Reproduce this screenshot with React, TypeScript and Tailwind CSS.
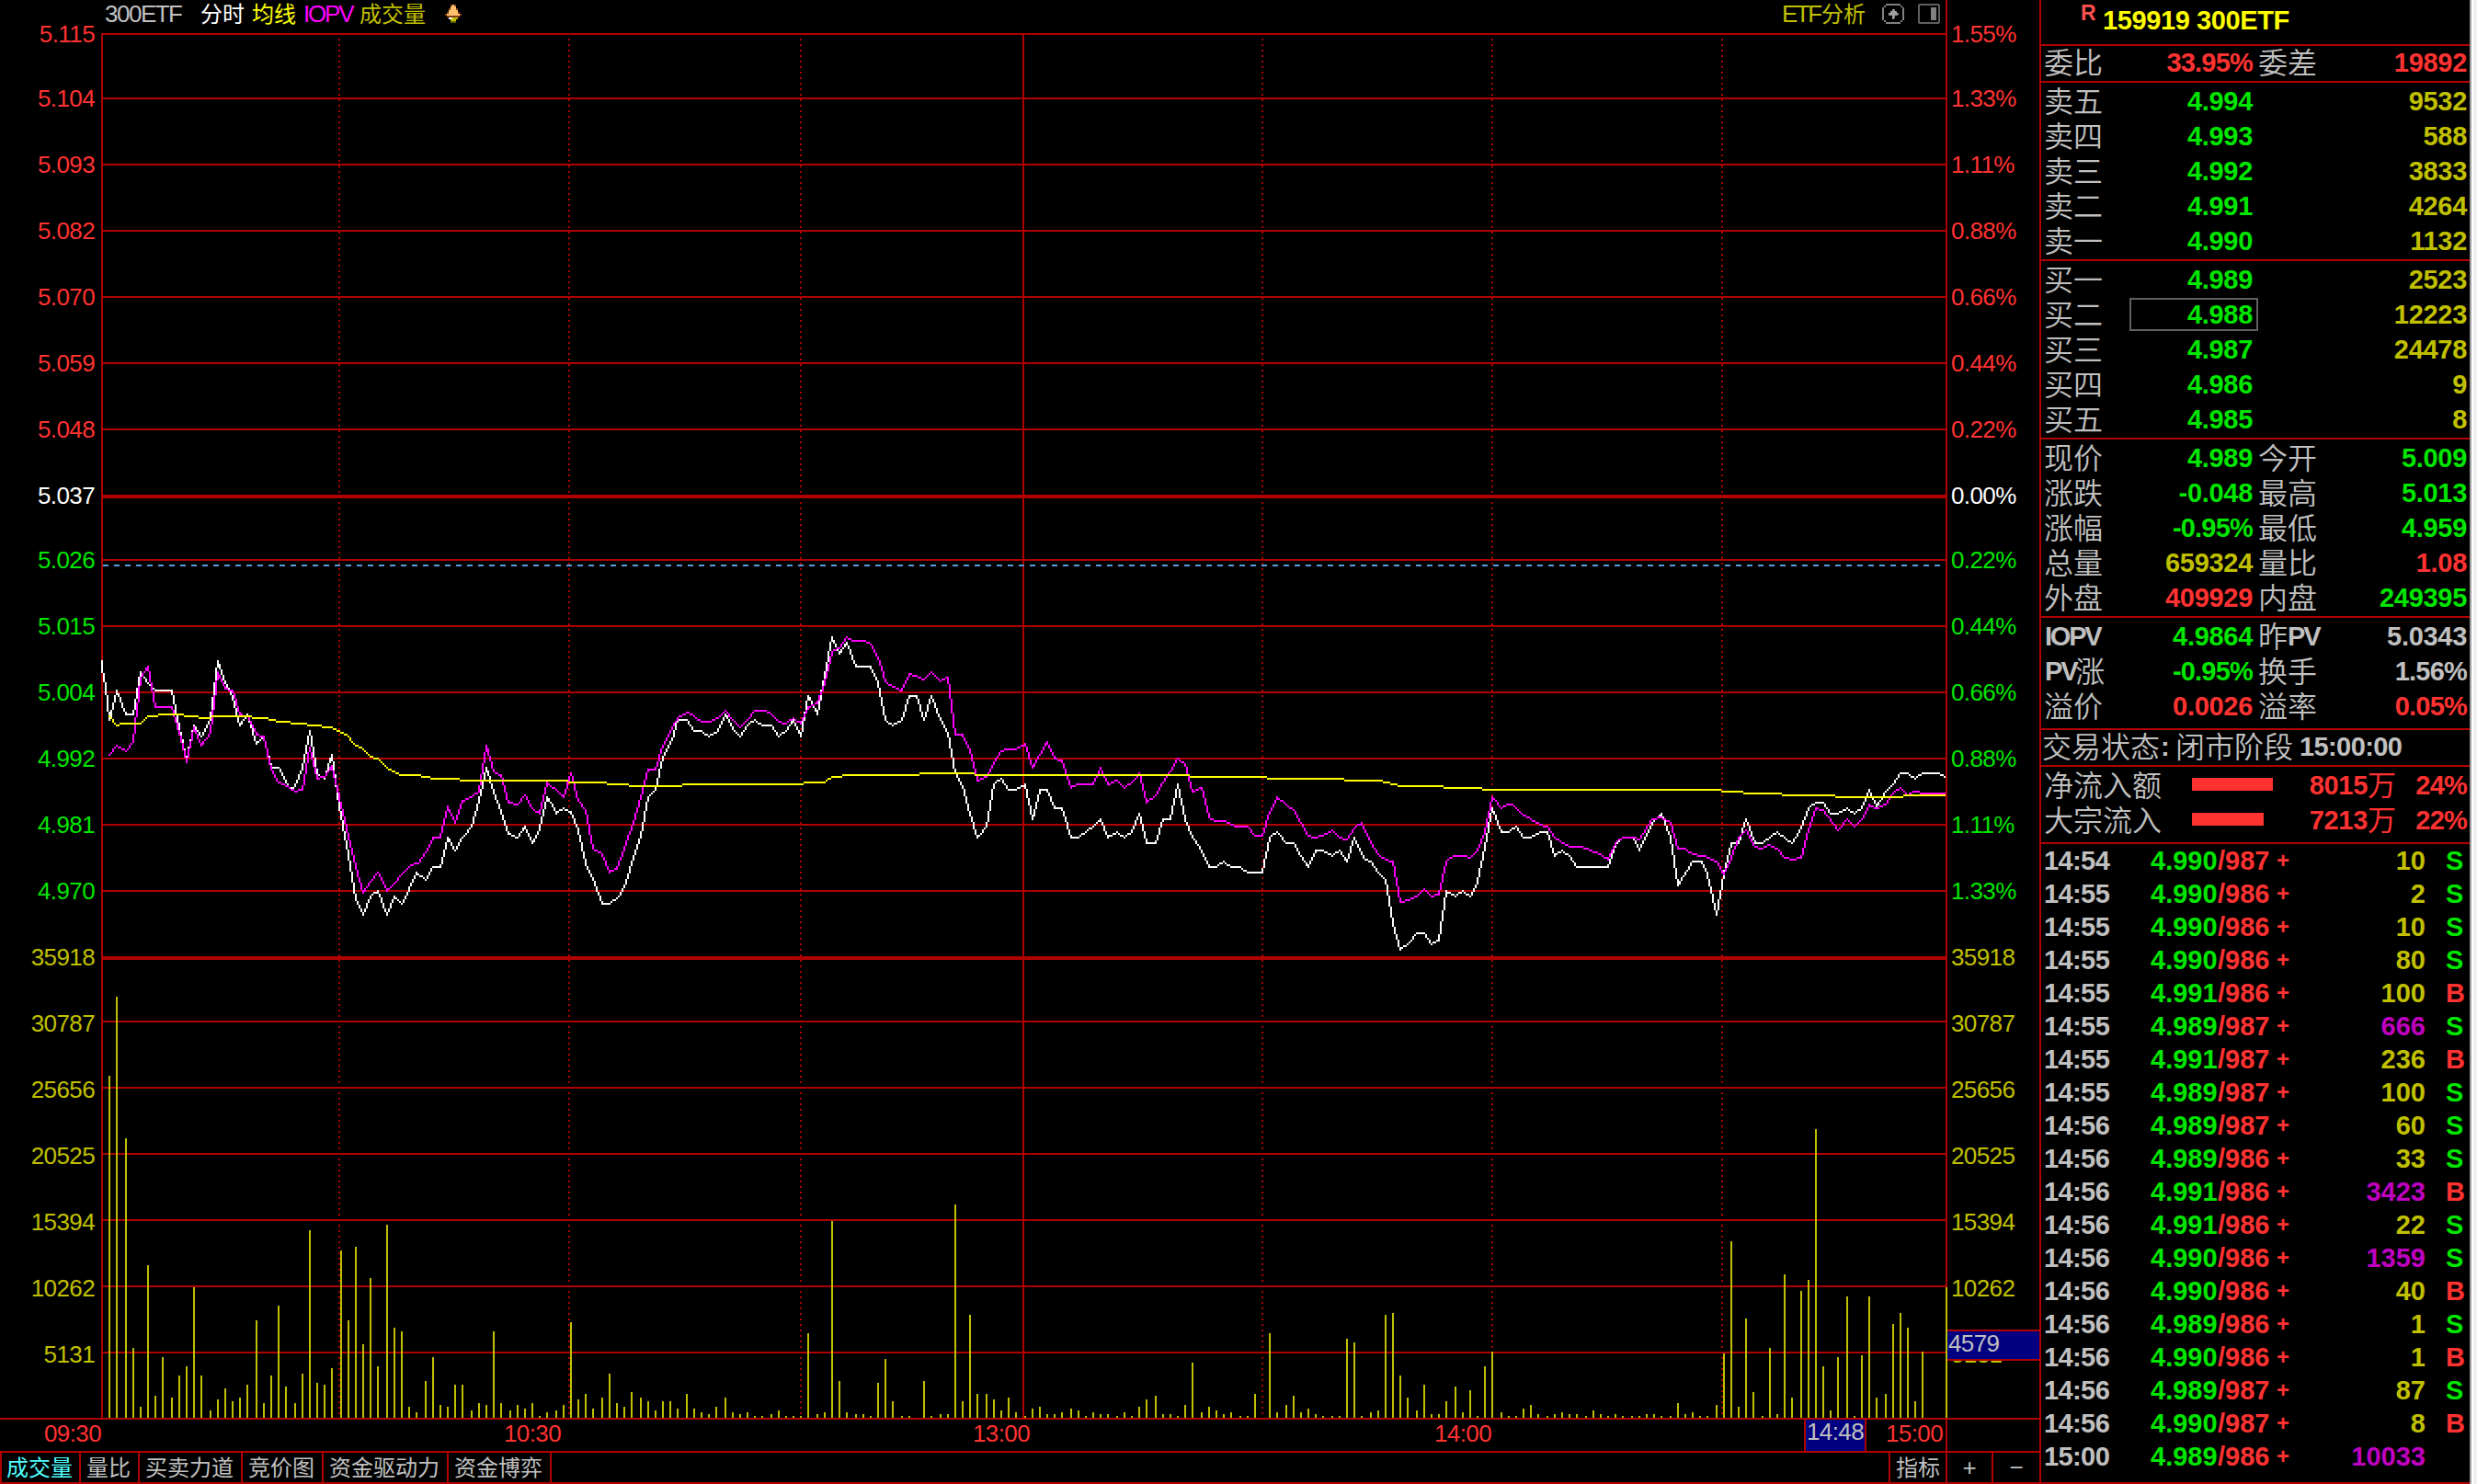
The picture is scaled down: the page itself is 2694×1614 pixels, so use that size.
import React from 'react';
import clsx from 'clsx';

const RED = 'text-[#ff3232]';
const GREEN = 'text-[#00e600]';
const YELLOW = 'text-[#c0c000]';
const GRAY = 'text-[#c0c0c0]';
const MAGENTA = 'text-[#c000c0]';

// y positions of the horizontal grid lines, in page pixels
const PRICE_LINES = [36, 106, 178, 250, 322, 394, 466, 538, 608, 680, 752, 824, 896, 968, 1040];
const VOLUME_LINES = [1110, 1182, 1254, 1326, 1398, 1470];

const PRICE_LABELS = ['5.115', '5.104', '5.093', '5.082', '5.070', '5.059', '5.048', '5.037', '5.026', '5.015', '5.004', '4.992', '4.981', '4.970'];
const PERCENT_LABELS = ['1.55%', '1.33%', '1.11%', '0.88%', '0.66%', '0.44%', '0.22%', '0.00%', '0.22%', '0.44%', '0.66%', '0.88%', '1.11%', '1.33%'];
const VOLUME_LABELS = ['35918', '30787', '25656', '20525', '15394', '10262', '5131'];

// one entry per minute, bar height in page pixels
const VOLUMES = [
  0, 372, 458, 304, 76, 12, 166, 24, 66, 22, 46, 56, 142, 46, 8, 20, 32, 18, 22, 36,
  106, 16, 46, 122, 34, 16, 48, 204, 38, 36, 54, 182, 106, 186, 80, 152, 56, 210, 98, 94,
  12, 6, 40, 66, 14, 12, 36, 36, 8, 16, 14, 94, 16, 8, 14, 10, 16, 2, 6, 8,
  14, 104, 20, 26, 10, 22, 48, 16, 12, 28, 22, 18, 8, 18, 18, 10, 26, 10, 6, 4,
  12, 22, 6, 4, 6, 2, 2, 4, 8, 2, 2, 2, 92, 4, 6, 214, 40, 6, 4, 4,
  2, 38, 64, 18, 2, 2, 0, 40, 2, 4, 4, 232, 18, 112, 26, 26, 20, 8, 22, 6,
  2, 10, 12, 4, 4, 6, 10, 8, 2, 6, 4, 4, 2, 6, 2, 12, 20, 24, 4, 4,
  2, 14, 60, 6, 12, 8, 4, 6, 2, 2, 26, 0, 92, 6, 14, 24, 6, 10, 4, 2,
  2, 2, 86, 82, 2, 6, 8, 112, 114, 46, 22, 8, 36, 4, 4, 18, 34, 6, 30, 2,
  56, 72, 6, 2, 2, 10, 14, 4, 2, 4, 6, 4, 4, 2, 8, 4, 2, 4, 2, 2,
  2, 4, 4, 2, 2, 16, 4, 6, 2, 2, 14, 70, 192, 12, 108, 28, 2, 76, 4, 156,
  22, 138, 150, 314, 56, 8, 66, 132, 2, 68, 132, 22, 26, 102, 114, 98, 18, 72, 0, 0,
  142,
];

const PRICE = `55,359 55,363 57,373 59,391 63,375 68,388 72,388 76,365 80,371 84,375 93,375 97,395 101,413 105,394 109,400 114,390 118,359
122,371 126,379 130,394 134,388 139,404 143,400 147,417 151,417 156,427 159,429 164,417 168,397 172,420 176,423 180,410 184,438 188,459
193,488 197,497 201,487 205,484 210,497 214,487 218,491 222,483 226,474 231,478 235,471 239,471 243,455 247,462 251,455 256,449 260,435
264,417 268,430 272,441 276,453 281,455 285,449 289,458 293,450 297,433 299,436 302,442 306,439 310,441 314,451 318,469 323,480 327,491
331,491 336,487 340,479 344,466 348,454 352,433 356,429 360,411 365,402 368,391 373,391 377,397 381,397 385,400 390,397 394,388 399,397
402,400 406,394 410,391 414,394 419,394 423,400 427,397 431,391 435,400 439,378 444,388 448,367 452,346 456,355 460,349 465,362 473,362
477,371 481,391 485,394 490,391 494,378 498,378 502,391 506,378 511,391 515,398 519,420 523,427 527,442 531,455 536,449 540,426 544,423
548,429 552,429 557,426 561,445 565,429 569,429 573,439 577,439 582,455 586,455 590,452 594,449 598,445 602,455 607,452 611,455 615,452
619,442 623,458 628,458 632,445 636,445 640,426 644,445 648,455 652,460 657,471 661,471 665,468 669,471 674,471 678,474 686,474 690,455
694,452 699,458 703,458 707,465 711,471 715,462 719,462 724,465 728,462 732,468 736,455 741,466 745,468 749,474 753,478 757,502 761,516
765,513 770,507 774,507 778,513 782,511 786,484 791,487 795,484 799,487 803,479 807,460 811,439 816,452 820,452 824,449 828,455 832,455
837,452 841,452 845,465 849,462 853,465 857,471 874,471 878,459 882,455 888,455 891,462 898,447 903,442 908,455 912,481 920,468 925,468
928,475 933,497 937,475 941,458 945,458 949,445 954,458 958,458 966,452 974,458 979,450 983,439 987,436 991,436 995,442 999,442 1004,439
1008,442 1012,439 1016,429 1020,438 1025,430 1029,426 1033,420 1037,420 1041,423 1045,420 1054,420 1057,422`;

const IOPV = `59,410 63,405 68,408 72,403 76,368 80,362 84,384 93,384 97,398 101,414 105,395 109,405 114,398 118,365 122,374 126,375
130,388 134,389 139,399 143,400 147,418 151,425 156,427 160,430 164,429 168,406 172,423 176,422 180,416 184,433 188,450 193,471 197,485
201,479 205,474 210,484 214,480 218,475 223,470 227,469 231,463 235,455 239,455 243,438 247,447 251,435 256,433 260,430 264,405 268,419
272,421 276,436 281,437 285,432 289,439 293,442 297,425 299,427 302,429 306,433 310,420 314,435 318,440 322,461 327,464 331,474 335,472
340,458 344,447 348,433 352,418 356,418 360,405 365,395 369,389 374,387 381,392 386,392 390,390 394,386 398,391 402,395 406,391 410,386
416,386 419,388 423,392 427,393 431,390 435,393 439,384 444,382 448,371 452,354 456,352 460,346 464,348 470,348 473,350 478,360 481,370
485,373 490,375 494,366 498,367 502,369 506,365 511,370 515,368 519,399 523,399 527,408 531,424 536,422 540,414 544,408 547,407 552,407
557,404 561,417 565,410 569,403 573,412 577,413 582,428 585,426 594,426 598,417 602,426 607,424 611,428 616,424 619,420 623,436 628,432
632,425 636,419 640,412 644,415 648,430 653,428 657,444 661,446 666,446 672,449 678,449 682,454 686,454 690,441 694,433 699,437 703,440
711,454 715,455 719,454 724,451 728,455 732,456 736,450 740,447 745,458 749,464 753,467 757,468 761,490 766,489 770,487 774,483 778,487
782,486 786,468 790,465 797,465 799,466 803,462 807,452 811,433 816,439 819,437 822,437 827,442 837,448 841,449 845,455 853,460 859,460
870,464 874,467 878,458 882,455 889,455 891,456 898,445 903,444 908,447 912,461 916,461 920,464 926,465 933,468 937,475 941,466 945,455
949,451 954,460 958,461 962,459 966,461 970,466 975,467 979,466 983,451 987,439 991,440 999,451 1004,445 1008,449 1012,445 1016,437
1020,439 1025,437 1029,431 1033,428 1037,432 1041,430 1046,431 1057,431`;

const AVERAGE = `59,389 63,394 66,393 76,393 80,389 85,389 86,388 99,388 100,389 107,389 108,390 114,390 115,389 136,389 137,390 145,390
146,391 149,391 150,392 157,392 158,393 166,393 167,394 174,394 175,395 180,395 183,397 188,399 192,404 197,407 201,411 205,412 210,417
217,421 228,421 229,422 233,422 234,423 249,423 250,424 308,424 309,425 329,425 330,426 341,426 342,427 370,427 371,426 436,426 437,425
448,425 449,424 452,422 457,422 458,421 499,421 500,420 529,420 530,421 646,421 647,422 688,422 689,423 730,423 731,424 751,424 752,425
755,425 756,426 759,426 760,427 784,427 785,428 805,428 806,429 935,429 936,430 947,430 948,431 968,431 969,432 997,432 998,433
1034,433 1035,432 1057,432`;

// The chart is drawn on a grid of 2px cells, so lines are stepped cell by cell
function tracePath(source: string) {
  const pts = source.trim().split(/\s+/).map((p) => p.split(',').map(Number));
  let d = '';
  for (let i = 1; i < pts.length; i++) {
    let [x, y] = pts[i - 1];
    const [x1, y1] = pts[i];
    const dx = Math.abs(x1 - x);
    const dy = -Math.abs(y1 - y);
    const sx = x < x1 ? 1 : -1;
    const sy = y < y1 ? 1 : -1;
    let err = dx + dy;
    while (true) {
      d += `M${x} ${y}h1v1h-1z`;
      if (x === x1 && y === y1) break;
      const e2 = 2 * err;
      if (e2 >= dy) {
        err += dy;
        x += sx;
      }
      if (e2 <= dx) {
        err += dx;
        y += sy;
      }
    }
  }
  return d;
}

function barX(i: number) {
  return Math.floor((i < 120 ? 55.55 : 55.6) + 4.1785 * i);
}

function Chart() {
  return (
    <svg className="block w-[2008px] h-[1514px] shrink-0" viewBox="55 14 1004 757" shapeRendering="crispEdges">
      <g fill="#b00000">
        {[...PRICE_LINES, ...VOLUME_LINES].map((y) => (
          <rect key={y} x={55} y={y / 2} width={1004} height={y === 538 || y === 1040 ? 2 : 1} />
        ))}
        <rect x={55} y={18} width={1} height={753} />
        <rect x={556} y={18} width={1} height={753} />
        <rect x={1058} y={14} width={1} height={757} />
      </g>
      {[184, 309, 435, 686, 811, 936].map((x) => (
        <line key={x} x1={x + 0.5} x2={x + 0.5} y1={21} y2={771} stroke="#b00000" strokeDasharray="1 2" />
      ))}
      <line x1={56} x2={1058} y1={307.5} y2={307.5} stroke="#5a9bd8" strokeDasharray="3 3" />
      <g fill="#c0c000">
        {VOLUMES.map((h, i) => (h ? <rect key={i} x={barX(i)} y={771 - h / 2} width={1} height={h / 2} /> : null))}
      </g>
      <path d={tracePath(PRICE)} fill="#ffffff" />
      <path d={tracePath(IOPV)} fill="#ff00ff" />
      <path d={tracePath(AVERAGE)} fill="#ffff00" />
    </svg>
  );
}

function AxisLabels({ labels, className }: { labels: string[]; className: string }) {
  const all = [...labels, ...VOLUME_LABELS];
  // volume captions hang two pixels lower than the price ones
  const tops = [...PRICE_LINES.map((y) => y - 8), ...VOLUME_LINES.map((y) => y - 6), 1542];
  return (
    <div className={clsx('text-[26px] leading-[18px] tracking-[-0.6px] shrink-0', className)}>
      {all.map((label, i) => (
        <div
          key={i}
          style={{ height: tops[i + 1] - tops[i] }}
          className={i < 7 ? RED : i === 7 ? 'text-white' : i < 14 ? GREEN : YELLOW}
        >
          {label}
        </div>
      ))}
    </div>
  );
}

function Cjk({ children, className }: { children: React.ReactNode; className?: string }) {
  return <span className={clsx('pt-[2px] whitespace-nowrap', className)}>{children}</span>;
}

function Label({ text }: { text: string }) {
  // Latin letters inside a caption use the bold number face
  const parts = text.match(/[A-Z]+|[^A-Z]+/g) ?? [];
  return (
    <div className="w-16 shrink-0 flex items-center text-[#c0c0c0] whitespace-nowrap">
      {parts.map((p) =>
        /[A-Z]/.test(p) ? (
          <span key={p} className="font-bold text-[29px] leading-[20px] tracking-[-2.2px]">{p}</span>
        ) : (
          <Cjk key={p} className="text-[32px] leading-[30px] -ml-px font-[350]">{p}</Cjk>
        )
      )}
    </div>
  );
}

function Num({ text, className }: { text: string; className: string }) {
  return (
    <div
      className={clsx(
        'font-bold text-[29px] leading-[20px] text-right whitespace-nowrap',
        text.endsWith('%') ? 'tracking-[-0.8px]' : 'tracking-[-0.3px]',
        className
      )}
    >
      {text}
    </div>
  );
}

type Row = [string, string, string, string, string, string];

const ORDER_RATIO: Row = ['委比', '33.95%', RED, '委差', '19892', RED];

const ASKS = [
  ['卖五', '4.994', '9532'],
  ['卖四', '4.993', '588'],
  ['卖三', '4.992', '3833'],
  ['卖二', '4.991', '4264'],
  ['卖一', '4.990', '1132'],
];

const BIDS = [
  ['买一', '4.989', '2523'],
  ['买二', '4.988', '12223'],
  ['买三', '4.987', '24478'],
  ['买四', '4.986', '9'],
  ['买五', '4.985', '8'],
];

const QUOTES: Row[] = [
  ['现价', '4.989', GREEN, '今开', '5.009', GREEN],
  ['涨跌', '-0.048', GREEN, '最高', '5.013', GREEN],
  ['涨幅', '-0.95%', GREEN, '最低', '4.959', GREEN],
  ['总量', '659324', YELLOW, '量比', '1.08', RED],
  ['外盘', '409929', RED, '内盘', '249395', GREEN],
];

const FUND: Row[] = [
  ['IOPV', '4.9864', GREEN, '昨PV', '5.0343', GRAY],
  ['PV涨', '-0.95%', GREEN, '换手', '1.56%', GRAY],
  ['溢价', '0.0026', RED, '溢率', '0.05%', RED],
];

const TICKS = [
  ['14:54', '4.990', '987', '10', 'S'],
  ['14:55', '4.990', '986', '2', 'S'],
  ['14:55', '4.990', '986', '10', 'S'],
  ['14:55', '4.990', '986', '80', 'S'],
  ['14:55', '4.991', '986', '100', 'B'],
  ['14:55', '4.989', '987', '666', 'S'],
  ['14:55', '4.991', '987', '236', 'B'],
  ['14:55', '4.989', '987', '100', 'S'],
  ['14:56', '4.989', '987', '60', 'S'],
  ['14:56', '4.989', '986', '33', 'S'],
  ['14:56', '4.991', '986', '3423', 'B'],
  ['14:56', '4.991', '986', '22', 'S'],
  ['14:56', '4.990', '986', '1359', 'S'],
  ['14:56', '4.990', '986', '40', 'B'],
  ['14:56', '4.989', '986', '1', 'S'],
  ['14:56', '4.990', '986', '1', 'B'],
  ['14:56', '4.989', '987', '87', 'S'],
  ['14:56', '4.990', '987', '8', 'B'],
  ['15:00', '4.989', '986', '10033', ''],
];

function QuoteRow({ row, className }: { row: Row; className?: string }) {
  const [l1, v1, c1, l2, v2, c2] = row;
  return (
    <div className={clsx('h-[38px] flex items-center pl-1 pr-[3px]', className ?? 'pt-[2px]')}>
      <Label text={l1} />
      <Num text={v1} className={clsx('w-[162px]', c1)} />
      <div className="w-[7px]" />
      <Label text={l2} />
      <Num text={v2} className={clsx('flex-1', c2)} />
    </div>
  );
}

function BookRow({ row }: { row: string[] }) {
  const selected = row[0] === '买二';
  return (
    <div className="h-[38px] flex items-center pl-1 pr-[3px] pt-[2px]">
      <Label text={row[0]} />
      <div className="w-7" />
      <div
        className={clsx(
          'w-[140px] h-9 border-2 flex items-center justify-end pr-1',
          selected ? 'border-[#606060]' : 'border-transparent'
        )}
      >
        <Num text={row[1]} className={GREEN} />
      </div>
      <Num text={row[2]} className={clsx('flex-1', YELLOW)} />
    </div>
  );
}

function FlowRow({ label, width, amount, percent }: { label: string; width: string; amount: string; percent: string }) {
  return (
    <div className="h-[38px] flex items-center pl-[3px] pr-[3px] pt-[2px]">
      <Cjk className="w-[161px] text-[32px] leading-[30px] text-[#c0c0c0] font-[350]">{label}</Cjk>
      <div className={clsx('h-[14px] bg-[#ff3232] mb-[2px]', width)} />
      <div className="flex-1 flex items-center justify-end">
        <Num text={amount} className={RED} />
        <Cjk className="text-[31px] leading-[28px] text-[#ff3232]">万</Cjk>
      </div>
      <Num text={percent} className={clsx('w-[77px]', RED)} />
    </div>
  );
}

function SidePanel() {
  return (
    <aside className="w-[468px] h-full shrink-0 border-l-2 border-b-2 border-[#b00000] flex flex-col">
      <div className="h-[50px] border-b-2 border-[#b00000] flex pl-[43px]">
        <span className="text-[23px] leading-[16px] font-bold text-[#ff5050] mt-[6px] w-[24px]">R</span>
        <span className="text-[29px] leading-[20px] tracking-[-0.4px] font-bold text-[#ffff00] mt-3">159919 300ETF</span>
      </div>
      <div className="h-10 border-b-2 border-[#b00000]">
        <QuoteRow row={ORDER_RATIO} className="pb-[2px]" />
      </div>
      <div className="h-[194px] border-b-2 border-[#b00000]">
        {ASKS.map((r) => <BookRow key={r[0]} row={r} />)}
      </div>
      <div className="h-[194px] border-b-2 border-[#b00000]">
        {BIDS.map((r) => <BookRow key={r[0]} row={r} />)}
      </div>
      <div className="h-[194px] border-b-2 border-[#b00000]">
        {QUOTES.map((r) => <QuoteRow key={r[0]} row={r} />)}
      </div>
      <div className="h-[122px] border-b-2 border-[#b00000]">
        {FUND.map((r) => <QuoteRow key={r[0]} row={r} />)}
      </div>
      <div className="h-10 border-b-2 border-[#b00000] flex items-center pl-px pb-[2px] text-[#c0c0c0]">
        <Cjk className="text-[32px] leading-[30px] w-[129px] font-[350]">交易状态</Cjk>
        <span className="text-[29px] leading-[20px] font-bold w-4">:</span>
        <Cjk className="text-[32px] leading-[30px] w-[135px] font-[350]">闭市阶段</Cjk>
        <span className="text-[29px] leading-[20px] font-bold tracking-[-0.6px]">15:00:00</span>
      </div>
      <div className="h-[84px] border-b-2 border-[#b00000]">
        <FlowRow label="净流入额" width="w-[88px]" amount="8015" percent="24%" />
        <FlowRow label="大宗流入" width="w-[78px]" amount="7213" percent="22%" />
      </div>
      <div className="flex-1">
        {TICKS.map(([time, price, iopv, qty, side], i) => (
          <div key={i} className="h-9 flex items-center pl-[3px] font-bold text-[29px] leading-[20px]">
            <span className="w-[116px] text-[#c0c0c0] tracking-[-0.6px]">{time}</span>
            <span className="w-[73px] text-[#00e600]">{price}</span>
            <span className="w-[64px] text-[#ff3232]">/{iopv}</span>
            <span className="w-[12px] text-[24px] text-[#ff3232]">+</span>
            <span className={clsx('w-[150px] text-right', Number(qty) > 500 ? MAGENTA : YELLOW)}>{qty}</span>
            <span className={clsx('ml-[22px] w-5', side === 'S' ? GREEN : RED)}>{side}</span>
          </div>
        ))}
      </div>
    </aside>
  );
}

function BellIcon() {
  return (
    <svg className="w-[18px] h-5" viewBox="0 0 9 10" shapeRendering="crispEdges">
      <path d="M3 0h3v2h1v2h1v1h1v1H8v1H1V6H0V5h1V4h1V2h1z" fill="#804010" />
      <path d="M4 0h1v1h1v2h1v2h1v1H1V5h1V3h1V1h1z" fill="#ffc070" />
      <path d="M2 7h5v1H6v1H3V8H2z" fill="#c0c000" />
      <path d="M2 7h2v1H2z" fill="#ffffff" />
      <path d="M3 9h3v1H3z" fill="#606000" />
    </svg>
  );
}

function Header() {
  return (
    <div className="h-7 flex">
      <div className="w-[2118px] border-r-2 border-[#b00000] flex items-center pt-[2px] pl-[114px] text-[26px] leading-[18px]">
        <span className="w-[104px] text-[#c0c0c0] tracking-[-1.5px]">300ETF</span>
        <Cjk className="w-[56px] text-[24px] leading-[22px] text-white">分时</Cjk>
        <Cjk className="w-[56px] text-[24px] leading-[22px] text-[#ffff00]">均线</Cjk>
        <span className="w-[61px] text-[#ff00ff] tracking-[-2.2px]">IOPV</span>
        <Cjk className="w-[93px] text-[24px] leading-[22px] text-[#c0c000]">成交量</Cjk>
        <BellIcon />
        <div className="flex-1" />
        <span className="text-[#c0c000] tracking-[-2.5px] w-[43px]">ETF</span>
        <Cjk className="w-[66px] text-[24px] leading-[22px] text-[#c0c000]">分析</Cjk>
        <svg className="w-6 h-[22px]" viewBox="0 0 12 11" shapeRendering="crispEdges">
          <path d="M2 0h8v1H2zM2 10h8v1H2zM0 2h1v7H0zM11 2h1v7h-1zM1 1h1v1H1zM10 1h1v1h-1zM1 9h1v1H1zM10 9h1v1h-1z" fill="#808080" />
          <path d="M5.5 3h1v1h1v1h1v1h-2v2h-1V6h-2V5h1V4h1z" fill="#a0a0a0" stroke="#a0a0a0" strokeWidth=".4" />
        </svg>
        <svg className="w-6 h-[22px] ml-[15px] mr-[6px]" viewBox="0 0 12 11" shapeRendering="crispEdges">
          <rect x=".5" y=".5" width="11" height="10" rx="1" fill="none" stroke="#606060" />
          <path d="M7 2h3v7H7z" fill="#808080" />
        </svg>
      </div>
    </div>
  );
}

function TimeAxis() {
  return (
    <div className="h-9 border-b-2 border-[#b00000] flex">
      <div className="w-[2118px] border-r-2 border-[#b00000] flex items-start text-[26px] leading-[18px] tracking-[-0.6px] text-[#ff3232] whitespace-nowrap">
        <span className="mt-[6px] ml-[48px] w-[62px]">09:30</span>
        <span className="mt-[6px] ml-[438px] w-[62px]">10:30</span>
        <span className="mt-[6px] ml-[448px] w-[62px]">13:00</span>
        <span className="mt-[6px] ml-[440px] w-[62px]">14:00</span>
        <span className="ml-[340px] w-[68px] h-[34px] pt-[4px] pl-px border-x-2 border-[#b00000] bg-[#000080] text-[#c0c0c0]">14:48</span>
        <span className="mt-[6px] ml-[21px] w-[62px]">15:00</span>
      </div>
    </div>
  );
}

function Tabs() {
  const tabs: [string, string][] = [
    ['成交量', 'w-[86px]'],
    ['量比', 'w-16'],
    ['买卖力道', 'w-28'],
    ['竞价图', 'w-[88px]'],
    ['资金驱动力', 'w-[136px]'],
    ['资金博弈', 'w-28'],
  ];
  return (
    <div className="h-[34px] border-b-2 border-l-2 border-[#b00000] flex">
      {tabs.map(([name, width], i) => (
        <div key={name} className={clsx('border-r-2 border-[#b00000] flex items-center justify-center pr-[2px]', width)}>
          <Cjk className={clsx('text-[24px] leading-[22px]', i === 0 ? 'text-[#50ffff]' : GRAY)}>{name}</Cjk>
        </div>
      ))}
      <div className="flex-1" />
      <div className="w-[64px] border-x-2 border-[#b00000] flex items-center justify-center">
        <Cjk className="text-[24px] leading-[22px] text-[#c0c0c0]">指标</Cjk>
      </div>
      <div className="w-[50px] border-r-2 border-[#b00000] flex items-center justify-center text-[26px] leading-[18px] text-[#c0c0c0]">+</div>
      <div className="w-[50px] flex items-center justify-center text-[26px] leading-[18px] text-[#c0c0c0]">−</div>
    </div>
  );
}

export default function App() {
  return (
    <div className='w-[2694px] h-[1614px] bg-black overflow-hidden flex font-["Liberation_Sans","Noto_Sans_CJK_SC",sans-serif]'>
      <main className="w-[2218px] shrink-0 flex flex-col">
        <Header />
        <div className="h-[1516px] flex border-b-2 border-[#b00000]">
          <AxisLabels labels={PRICE_LABELS} className="w-[110px] text-right pr-[7px]" />
          <Chart />
          <div className="relative">
            <AxisLabels labels={PERCENT_LABELS} className="w-[100px] pl-[4px]" />
            <div className="absolute left-0 top-[1418px] w-[100px] h-[34px] border-y-2 border-[#b00000] bg-[#000080] text-[26px] leading-[18px] tracking-[-0.6px] text-[#c0c0c0] pt-[4px] pl-[1px]">
              4579
            </div>
          </div>
        </div>
        <TimeAxis />
        <Tabs />
      </main>
      <SidePanel />
      <div className="w-2 border-l-2 border-[#a0a0a0] bg-[#f0f0f0]">
        <div className="w-[2px] h-full bg-white" />
      </div>
    </div>
  );
}
